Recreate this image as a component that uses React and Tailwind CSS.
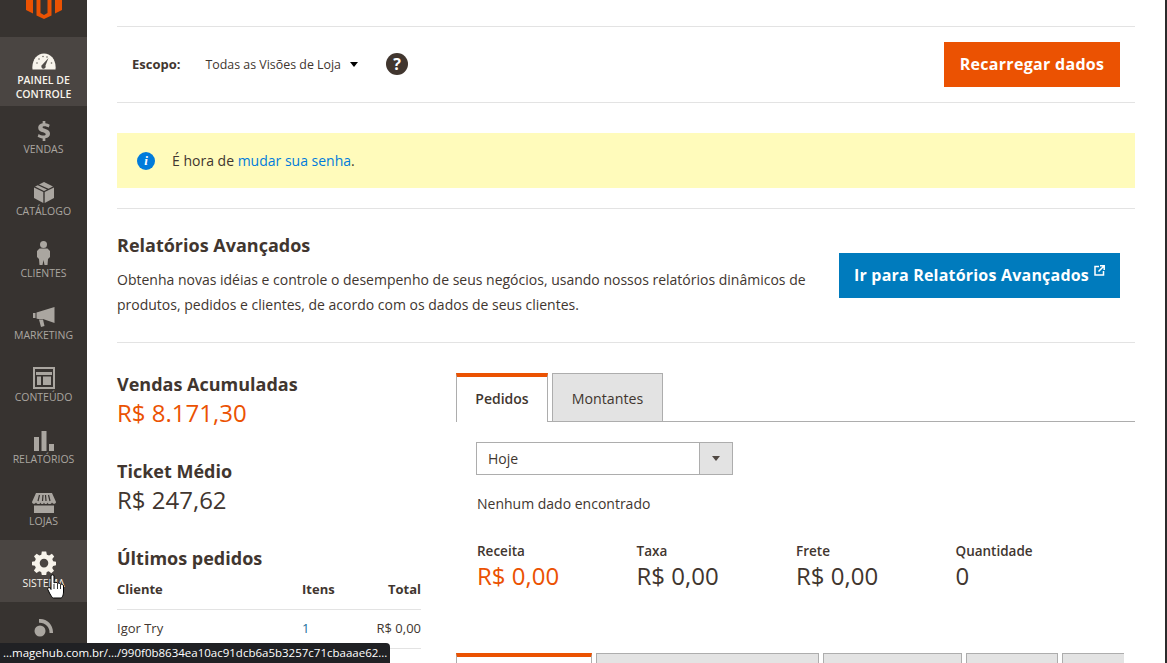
import React from 'react';

const GaugeIcon = () => (
  <svg width="24" height="17" viewBox="0 0 24 17">
    <path d="M0.500 16.500 C-0.500 7 5 0.500 12 0.500 C19 0.500 24.500 7 23.500 16.500 Z" fill="#f7f3eb" />
    <g fill="#6b6660">
      <circle cx="5" cy="10" r="0.800" /><circle cx="7" cy="6" r="0.800" /><circle cx="11" cy="3.500" r="0.800" />
      <circle cx="15" cy="4" r="0.800" /><circle cx="19.500" cy="10" r="0.800" />
    </g>
    <path d="M16.500 5 L13.500 12.500 A2.200 2.200 0 1 1 10.500 11.500 Z" fill="#514d49" />
  </svg>
);

const DollarIcon = () => (
  <svg width="14" height="20" viewBox="0 0 14 21" fill="#aaa6a0">
    <path d="M5.600 0h2.800v2.400c1.800.2 3.400.8 4.600 1.500l-1 3c-1.300-.8-3-1.400-4.500-1.400-1.300 0-2 .4-2 1.100 0 .8 1 1.200 3 1.900 3 1 4.800 2.300 4.800 5 0 2.500-1.800 4.300-4.900 4.700V21H5.600v-2.600c-2-.2-4-.9-5.300-1.800l1.100-3c1.500 1 3.400 1.700 5 1.700 1.500 0 2.400-.5 2.400-1.400 0-.8-.9-1.300-2.800-2C3 10.900.9 9.600.9 7c0-2.400 1.800-4.200 4.700-4.600z" />
  </svg>
);

const BoxIcon = () => (
  <svg width="20" height="21" viewBox="0 0 20 21" fill="#aaa6a0">
    <path d="M0 5.500 L9.300 10 V21 L0 16 Z" />
    <path d="M20 5.500 L10.700 10 V21 L20 16 Z" />
    <path d="M5 2.500 L10 0 L19 4.400 L14.500 6.800 Z" />
    <path d="M3.800 3.200 L1 4.500 L10 8.900 L13 7.400 Z" />
  </svg>
);

const PersonIcon = () => (
  <svg width="13" height="24" viewBox="0 0 13 24" fill="#aaa6a0">
    <circle cx="6.500" cy="3.500" r="3.500" />
    <path d="M2.500 7.500 H10.500 L13 10 V16 L11 18 L10.500 24 H7.500 L6.500 19 L5.500 24 H2.500 L2 18 L0 16 V10 Z" />
  </svg>
);

const MegaphoneIcon = () => (
  <svg width="22" height="20" viewBox="0 0 22 20" fill="#aaa6a0">
    <path d="M0 6 H2.500 V11 H0 Z" />
    <path d="M3.500 5.500 L21.500 0 V16 L10 12 L5 12 L3.500 11.500 Z" />
    <path d="M6 12.500 H10 L11.500 19 L8 20 Z" />
  </svg>
);

const LayoutIcon = () => (
  <svg width="22" height="22" viewBox="0 0 22 22" fill="none" stroke="#aaa6a0">
    <rect x="1" y="1" width="20" height="20" strokeWidth="2" />
    <path d="M3 6.500 H19" strokeWidth="3" />
    <path d="M4 9.500 H8 V18 H4 Z M10 9.500 H18 V18 H10 Z" fill="#aaa6a0" stroke="none" />
  </svg>
);

const BarsIcon = () => (
  <svg width="20" height="20" viewBox="0 0 20 20" fill="#aaa6a0">
    <rect x="0" y="6" width="5" height="14" />
    <rect x="7.500" y="0" width="5" height="20" />
    <rect x="15" y="13" width="5" height="7" />
  </svg>
);

const StoreIcon = () => (
  <svg width="24" height="20" viewBox="0 0 24 20" fill="#aaa6a0">
    <path d="M4 0 H20 L24 9 C24 11 21 11.500 20 9.500 C19 11.500 16 11.500 15.500 9.500 C15 11.500 12.500 11.500 12 9.500 C11.500 11.500 9 11.500 8.500 9.500 C8 11.500 5 11.500 4 9.500 C3 11.500 0 11 0 9 Z" />
    <path d="M2 12.500 H22 V20 H2 Z" />
    <path d="M7.500 2 L6 8 M11 2 L10.500 8 M13.500 2 L14 8 M16.500 2 L18 8" stroke="#373330" strokeWidth="1.200" />
  </svg>
);

const GearIcon = () => (
  <svg width="24" height="24" viewBox="0 0 24 24">
    <path
      fill="#f7f3eb"
      fillRule="evenodd"
      d="M9.800 0.500 H14.200 L14.900 3.700 L17.100 4.600 L19.900 2.800 L22.200 5.500 L20.300 8.100 L21.100 10.200 L24 10.800 V14.300 L21.100 14.900 L20.200 17 L22 19.700 L19.300 22.200 L16.700 20.300 L14.700 21.100 L14.200 23.900 H9.800 L9.200 21 L7.200 20.200 L4.500 22 L1.900 19.400 L3.800 16.800 L2.900 14.700 L0 14.200 V10.800 L2.900 10.200 L3.800 8 L2 5.300 L4.700 2.800 L7.300 4.600 L9.300 3.800 Z M12 7.800 A4.300 4.300 0 1 0 12 16.400 A4.300 4.300 0 1 0 12 7.800 Z"
    />
  </svg>
);

const FeedIcon = () => (
  <svg width="20" height="20" viewBox="0 0 20 20" fill="#aaa6a0">
    <circle cx="6" cy="14" r="5.500" />
    <path d="M5 2 C12 1 19 7 19 15 L19 16 L15.500 16 C16 10 11 5.500 5 5.800 Z" />
  </svg>
);

const NavItem = ({ icon, label, active }) => (
  <div className={`h-[62px] flex flex-col items-center ${active ? 'bg-[#4a4542]' : ''}`}>
    <div className="h-[35px] flex items-end justify-center">{icon}</div>
    <span className={`text-[10.5px] leading-[14px] mt-[1px] text-center ${active ? 'text-[#f7f3eb]' : 'text-[#aaa6a0]'}`}>{label}</span>
  </div>
);

const Sidebar = () => (
  <aside className="w-[87px] shrink-0 h-[663px] overflow-hidden bg-[#373330]">
    <div className="h-[37px] flex justify-center">
      <svg width="36" height="19" viewBox="0 0 36 19" fill="#eb5202">
        <path d="M0 0 H7 V13.500 L0 10 Z" />
        <path d="M29 0 H36 V10 L29 13.500 Z" />
        <path d="M10.500 0 H14.500 V13 L18 15 L21.500 13 V0 H25.500 V15.500 L18 19 L10.500 15.500 Z" />
      </svg>
    </div>
    <div className="h-[69px] flex flex-col items-center bg-[#4a4542] pt-[16px]">
      <GaugeIcon />
      <span className="mt-[3px] text-[10.5px] leading-[14px] text-center font-semibold text-[#f7f3eb]">PAINEL DE<br />CONTROLE</span>
    </div>
    <NavItem icon={<DollarIcon />} label="VENDAS" />
    <NavItem icon={<BoxIcon />} label="CATÁLOGO" />
    <NavItem icon={<PersonIcon />} label="CLIENTES" />
    <NavItem icon={<MegaphoneIcon />} label="MARKETING" />
    <NavItem icon={<LayoutIcon />} label="CONTEÚDO" />
    <NavItem icon={<BarsIcon />} label="RELATÓRIOS" />
    <NavItem icon={<StoreIcon />} label="LOJAS" />
    <NavItem icon={<GearIcon />} label="SISTEMA" active />
    <NavItem icon={<FeedIcon />} label="" />
  </aside>
);

const Stat = ({ label, value, orange }) => (
  <div className="w-[159.500px] shrink-0">
    <div className="text-[13.500px] leading-[18px] font-semibold text-[#41362f]">{label}</div>
    <div className={`text-[24px] leading-[32px] font-medium ${orange ? 'text-[#eb5202]' : 'text-[#41362f]'}`}>{value}</div>
  </div>
);

const HandCursor = () => (
  <svg className="absolute left-[47px] top-[574px]" width="18" height="25" viewBox="0 0 18 25">
    <path
      d="M4 2 C4 0.500 7 0.500 7 2 V9 C8 8 10 8 10.500 9.500 C11.500 8.800 13 9 13.500 10.500 C14.500 10 16.500 10.300 16.500 12 V18 C16.500 21 15 24 14 24 H6.500 C5 24 4.500 22 3 20 L0.800 15.500 C0.300 13.500 2.500 13 3.500 14.500 L4 15.500 Z"
      fill="#fff"
      stroke="#000"
      strokeWidth="1"
    />
    <path d="M7 10 V15 M10.500 10 V15 M13.500 11 V15" stroke="#000" strokeWidth="0.800" fill="none" />
  </svg>
);

export default function App() {
  return (
    <div className="relative flex h-[663px] overflow-hidden bg-white text-[#41362f]" style={{ fontFamily: '"Open Sans", sans-serif' }}>
      <Sidebar />

      <main className="flex-1 min-w-0 pl-[30px] pr-[30px] pt-[26px]">
        {/* Scope bar */}
        <div className="h-[77px] border-y border-[#e3e3e3] flex items-center pl-[15px] pr-[15px]">
          <span className="text-[13px] font-bold text-[#41362f]">Escopo:</span>
          <span className="ml-[25px] mt-[1px] text-[12.400px] text-[#41362f]">Todas as Visões de Loja</span>
          <span className="ml-[8.500px] w-0 h-0 border-x-[4.500px] border-x-transparent border-t-[5px] border-t-black"></span>
          <span className="ml-[28.500px] -mt-[1px] w-[22px] h-[22px] rounded-full bg-[#41362f] text-white text-[16px] font-bold flex items-center justify-center">?</span>
          <button className="ml-auto w-[176px] h-[45px] -mt-[1px] bg-[#eb5202] text-white text-[16px] tracking-[0.3px] font-bold">Recarregar dados</button>
        </div>

        {/* Password notice */}
        <div className="mt-[30px] h-[55px] bg-[#fffbbb] flex items-center pl-[20px]">
          <span className="w-[18px] h-[18px] rounded-full bg-[#007bdb] text-white text-[13px] font-bold italic flex items-center justify-center" style={{ fontFamily: '"Liberation Serif", serif' }}>i</span>
          <span className="ml-[17px] text-[14px] text-[#41362f]">É hora de <a className="text-[#007bdb]">mudar sua senha</a>.</span>
        </div>

        {/* Advanced reporting */}
        <div className="mt-[20px] h-[135px] border-y border-[#e3e3e3] flex">
          <div className="flex-1 pt-[25px]">
            <h2 className="text-[18px] leading-[22px] font-bold text-[#41362f]">Relatórios Avançados</h2>
            <p className="mt-[12px] text-[14px] leading-[24.500px] text-[#41362f]">
              Obtenha novas idéias e controle o desempenho de seus negócios, usando nossos relatórios dinâmicos de<br />
              produtos, pedidos e clientes, de acordo com os dados de seus clientes.
            </p>
          </div>
          <div className="pt-[44px] pr-[15px]">
            <button className="w-[281px] h-[45px] pb-[2px] bg-[#007bbd] text-white text-[16px] tracking-[0.2px] font-bold flex items-center justify-center gap-[5px]">
              Ir para Relatórios Avançados
              <svg className="-mt-[8px]" width="11" height="11" viewBox="0 0 11 11" fill="none" stroke="#fff" strokeWidth="1.500">
                <path d="M5 1.500 H1 V10 H9.500 V6" />
                <path d="M4.500 6.500 L9.500 1.500 M6 .8 H10.200 V5" />
              </svg>
            </button>
          </div>
        </div>

        {/* Dashboard */}
        <div className="flex">
          <div className="w-[304px] shrink-0 pt-[29px]">
            <div className="text-[18px] leading-[24px] font-bold">Vendas Acumuladas</div>
            <div className="mt-[1px] text-[24px] leading-[32px] font-medium text-[#eb5202]">R$ 8.171,30</div>
            <div className="mt-[30px] text-[18px] leading-[24px] font-bold">Ticket Médio</div>
            <div className="mt-[1px] text-[24px] leading-[32px] font-medium">R$ 247,62</div>
            <div className="mt-[30px] text-[18px] leading-[24px] font-bold">Últimos pedidos</div>
            <div className="mt-[8px] h-[32px] border-b border-[#e3e3e3] flex text-[13px] leading-[18px] font-bold pt-[2px]">
              <span className="w-[185px]">Cliente</span>
              <span className="w-[69px]">Itens</span>
              <span className="flex-1 text-right">Total</span>
            </div>
            <div className="h-[39px] border-b border-[#e3e3e3] flex items-center text-[13px]">
              <span className="w-[185px]">Igor Try</span>
              <span className="w-[50px] text-[#1a6f9c]">1</span>
              <span className="flex-1 text-right">R$ 0,00</span>
            </div>
          </div>

          <div className="flex-1 min-w-0 ml-[35px] pt-[30px]">
            <div className="h-[49px] border-b border-[#adadad] flex items-end gap-[4px]">
              <div className="w-[92px] h-[49px] -mb-px bg-white border-x border-[#adadad] border-t-[4px] border-t-[#eb5202] text-center text-[14px] font-semibold leading-[44px]">Pedidos</div>
              <div className="w-[111px] h-[49px] -mb-px bg-[#e3e3e3] border border-[#adadad] text-center text-[14.200px] leading-[49px]">Montantes</div>
            </div>
            <div className="pl-[20px]">
              <div className="mt-[20px] w-[257px] h-[33px] border border-[#adadad] flex items-center text-[14px]">
                <span className="flex-1 pl-[11px]">Hoje</span>
                <span className="w-[33px] h-full bg-[#e3e3e3] border-l border-[#adadad] flex items-center justify-center">
                  <span className="w-0 h-0 border-x-[4.500px] border-x-transparent border-t-[5px] border-t-[#514943]"></span>
                </span>
              </div>
              <div className="mt-[18px] pl-[1px] text-[14px] leading-[22px]">Nenhum dado encontrado</div>
              <div className="mt-[27px] pl-[1px] flex">
                <Stat label="Receita" value="R$ 0,00" orange />
                <Stat label="Taxa" value="R$ 0,00" />
                <Stat label="Frete" value="R$ 0,00" />
                <Stat label="Quantidade" value="0" />
              </div>
            </div>
            <div className="mt-[61px] flex gap-[4px]">
              <div className="w-[136px] h-[20px] border-x border-[#adadad] border-t-[4px] border-t-[#eb5202] bg-white"></div>
              <div className="w-[223px] h-[20px] border border-[#adadad] bg-[#e3e3e3]"></div>
              <div className="w-[139px] h-[20px] border border-[#adadad] bg-[#e3e3e3]"></div>
              <div className="w-[92px] h-[20px] border border-[#adadad] bg-[#e3e3e3]"></div>
              <div className="w-[62px] h-[20px] border border-[#adadad] border-r-0 bg-[#e3e3e3]"></div>
            </div>
          </div>
        </div>
      </main>

      {/* Window edge */}
      <div className="w-[2px] shrink-0 bg-[#2b2b2b]"></div>

      {/* Browser link preview */}
      <div className="absolute left-0 bottom-0 w-[390px] h-[20px] bg-[#202124] rounded-tr-[4px] text-white text-[11.500px] leading-[20px] pl-[3px] whitespace-nowrap overflow-hidden">
        ...magehub.com.br/.../990f0b8634ea10ac91dcb6a5b3257c71cbaaae62...
      </div>
      <HandCursor />
    </div>
  );
}
